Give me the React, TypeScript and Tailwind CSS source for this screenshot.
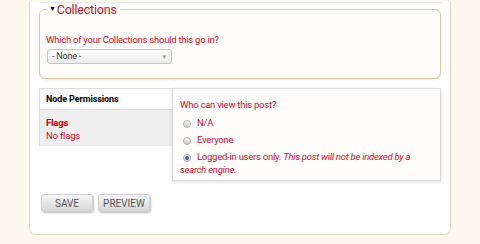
import { useState } from "react";

const red = "text-[#c8102e]";

function Radio({ checked }: { checked?: boolean }) {
  return (
    <span className="inline-block relative top-[1px] w-[8px] h-[8px] rounded-full border border-[#b5b5b5] bg-gradient-to-b from-[#f4f4f4] to-[#cfcfcf] mr-[6px] ml-[3px] align-middle">
      {checked && (
        <span className="absolute left-[1px] top-[1px] w-[4px] h-[4px] rounded-full bg-[#2f6fa8]" />
      )}
    </span>
  );
}

export default function App() {
  const [choice] = useState("logged");

  const options = [
    { id: "na", label: "N/A" },
    { id: "everyone", label: "Everyone" },
  ];

  return (
    <main
      className="w-[480px] h-[244px] bg-[#fdf8ee] overflow-hidden"
      style={{ fontFamily: "Roboto, 'Liberation Sans', Arial, sans-serif" }}
    >
      <div className="ml-[29px] w-[422px] h-[234px] bg-white border-x border-b border-[#e6dbc2] rounded-b-[6px] relative">
        <div className="absolute left-[10px] top-0 w-[402px] h-[2px] border-b border-[#e4e4e4]" />

        <fieldset className="ml-[9px] mt-[1px] w-[402px] h-[78px] border border-[#d8c9a3] rounded-[6px] bg-[#fffdfa] shadow-[0_1px_2px_rgba(0,0,0,0.08)] px-[6px]">
          <legend className={`ml-0 px-[3px] text-[12.5px] leading-[16px] tracking-[-0.2px] ${red}`}>
            <span className="text-[7px] text-black align-[3px] mr-[1px]">▼</span>
            Collections
          </legend>
          <div className={`mt-[15px] text-[9.5px] leading-[13px] tracking-[-0.25px] ${red}`}>
            Which of your Collections should this go in?
          </div>
          <div className="mt-[3px] ml-[1px] w-[125px] h-[15px] rounded-[3px] border border-[#c4c4c4] bg-gradient-to-b from-[#ffffff] to-[#ececec] flex items-center justify-between px-[4px] text-[9px] tracking-[-0.2px] text-[#444]">
            <span>- None -</span>
            <span className="text-[6px] text-[#999]">▼</span>
          </div>
        </fieldset>

        <div className="ml-[9px] mt-[9px] flex">
          <div className="w-[133px] h-[58px] border-l border-t border-b border-[#dcdcdc]">
            <div className="h-[21px] bg-white flex items-center pt-[2px] px-[6px] text-[9px] font-bold tracking-[-0.1px] text-black border-b border-[#dcdcdc]">
              Node Permissions
            </div>
            <div className="h-[36px] bg-[#eeeeee] px-[6px] pt-[6px] text-[9.5px] tracking-[-0.2px]">
              <div className="leading-[13px] font-bold text-[#c00]">Flags</div>
              <div className={`leading-[13px] ${red}`}>No flags</div>
            </div>
          </div>
          <div className="w-[269px] h-[93px] border border-[#dcdcdc] bg-[#fffdfb] shadow-[0_1px_3px_rgba(0,0,0,0.15)] pl-[7px] pr-[12px] pt-[9px] text-[9.5px] tracking-[-0.25px]">
            <div className={`leading-[13px] ${red}`}>Who can view this post?</div>
            <div className="mt-[5px] flex flex-col gap-[4px]">
              {options.map((o) => (
                <div key={o.id} className={`leading-[13px] ${red}`}>
                  <Radio checked={choice === o.id} />
                  {o.label}
                </div>
              ))}
              <div className={`leading-[13px] ${red}`}>
                <Radio checked={choice === "logged"} />
                Logged-in users only. <em>This post will not be indexed by a search engine.</em>
              </div>
            </div>
          </div>
        </div>

        <div className="ml-[11px] mt-[13px] flex gap-[5px]">
          <button className="w-[52px] h-[18px] rounded-[3px] border border-[#cfcfcf] bg-gradient-to-b from-[#f7f7f7] to-[#d6d6d6] shadow-[1px_1px_2px_rgba(0,0,0,0.25)] text-[10px] text-[#555]">
            SAVE
          </button>
          <button className="w-[52px] h-[18px] rounded-[3px] border border-[#cfcfcf] bg-gradient-to-b from-[#f7f7f7] to-[#d6d6d6] shadow-[1px_1px_2px_rgba(0,0,0,0.25)] text-[10px] text-[#555]">
            PREVIEW
          </button>
        </div>
      </div>
    </main>
  );
}
